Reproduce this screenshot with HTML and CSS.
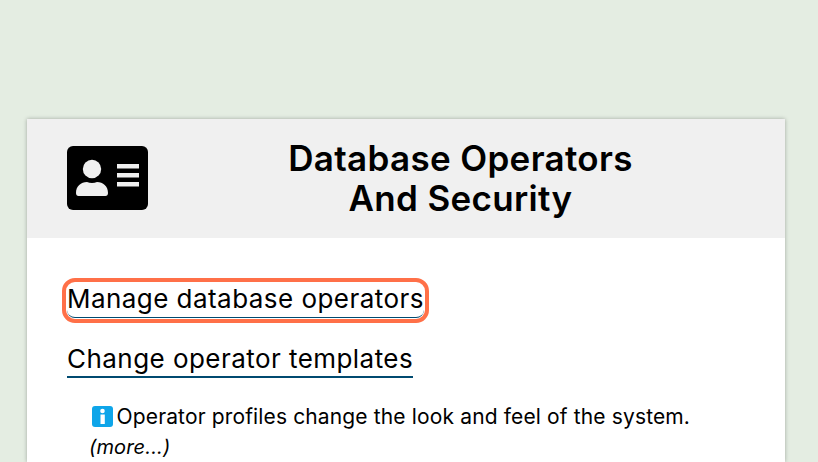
FILE: index.html
```html
<!DOCTYPE html>
<html lang="en">
<head>
    <meta charset="UTF-8">
    <title>Database Operators And Security</title>
    <link rel="stylesheet" href="styles.css">
</head>
<body>
    <div class="card">
        <div class="card-head">
            <svg class="head-icon" width="82" height="64" viewBox="0 0 82 64">
                <rect x="0" y="0" width="81" height="64" rx="6" fill="#000"/>
                <circle cx="25" cy="23" r="9.200" fill="#f0f0f0"/>
                <path d="M9 47c0-7 5-11 11-11 3 1.400 7 1.400 10 0 6 0 11 4 11 11 0 2-1 3-2.500 3h-27c-1.500 0-2.500-1-2.500-3z" fill="#f0f0f0"/>
                <rect x="50" y="18" width="22" height="4.500" fill="#f0f0f0"/>
                <rect x="50" y="27" width="22" height="4.500" fill="#f0f0f0"/>
                <rect x="50" y="36" width="22" height="4.500" fill="#f0f0f0"/>
            </svg>
            <h1 class="head-title">Database Operators<br>And Security</h1>
        </div>
        <div class="card-body">
            <div class="link-row"><a class="link link-focus" href="#">Manage database operators</a></div>
            <div class="link-row"><a class="link" href="#">Change operator templates</a></div>
            <p class="note">
                <svg class="info" width="21" height="21" viewBox="0 0 21 21">
                    <rect width="21" height="21" rx="3" fill="#0ea5e9"/>
                    <circle cx="10.500" cy="5" r="2.300" fill="#fff"/>
                    <rect x="8.500" y="8.500" width="4.300" height="9.500" fill="#fff"/>
                </svg>
                Operator profiles change the look and feel of the system.
                <br><em class="more">(more...)</em>
            </p>
        </div>
    </div>
</body>
</html>
```

FILE: styles.css
```css
*{
    margin:0;
    padding:0;
    border:0;
    box-sizing: border-box;
}
html,body{
    height: 462px;
    overflow: hidden;
}
body{
    background-color: #e4ede2;
    padding: 119px 33px 0 27px;
    font-family: "Inter", "Liberation Sans", sans-serif;
    color: #000;
}
.card{
    background-color: #fff;
    box-shadow: 0 0 4px rgba(0,0,0,0.3);
    height: 343px;
}
.card-head{
    display: flex;
    align-items: center;
    height: 119px;
    padding: 0 40px;
    background-color: #f0f0f0;
}
.head-icon{
    flex: none;
    margin-top: -1px;
}
.head-title{
    flex: 1;
    padding: 0 0 2px 27px;
    font-size: 35px;
    line-height: 40px;
    font-weight: 600;
    letter-spacing: 0.33px;
    text-align: center;
}
.card-body{
    padding: 45px 40px 0;
}
.link-row{
    height: 60px;
}
.link{
    display: inline-block;
    padding-bottom: 2px;
    font-size: 26px;
    line-height: 31px;
    letter-spacing: 0.45px;
    color: #000;
    text-decoration: none;
    border-bottom: 2px solid #004a70;
}
.link-focus{
    padding-bottom: 3px;
    border-bottom-width: 1px;
    outline: 4px solid #ff7048;
    outline-offset: 1px;
    border-radius: 8px;
}
.note{
    margin-top: -1px;
    margin-left: 22px;
    font-size: 21px;
    line-height: 30px;
    letter-spacing: 0.14px;
}
.more{
    font-size: 20px;
}
.info{
    margin: 0 -2px 0 2.500px;
    vertical-align: -3px;
}
```
